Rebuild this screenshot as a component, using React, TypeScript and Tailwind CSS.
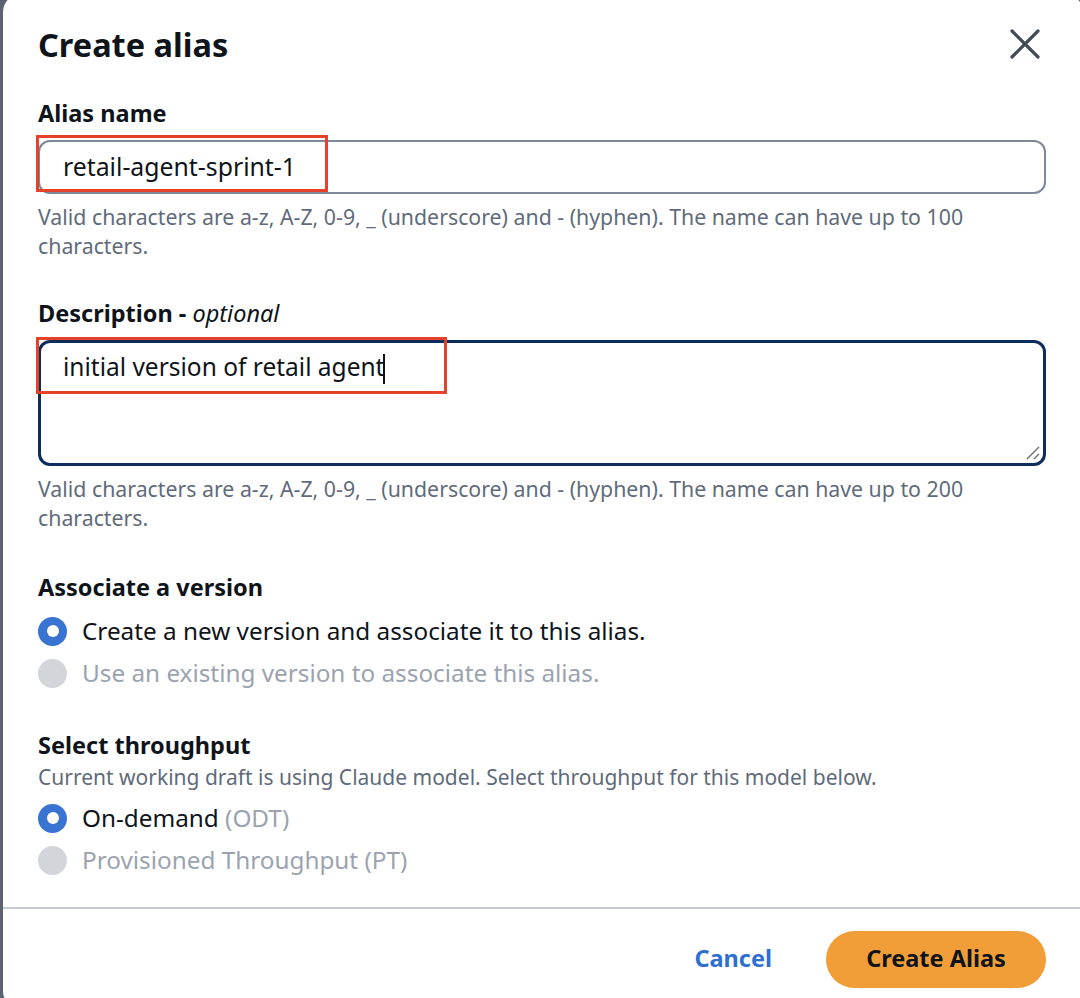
const font = { fontFamily: '"Noto Sans", "Open Sans", Arial, sans-serif' }

function Radio({ checked, disabled, children }: { checked?: boolean; disabled?: boolean; children: React.ReactNode }) {
  return (
    <div className="flex items-center gap-[15px] h-[42px]">
      {checked ? (
        <span className="w-[29px] h-[29px] rounded-full bg-[#3a74d2] flex items-center justify-center shrink-0">
          <span className="w-[12px] h-[12px] rounded-full bg-white" />
        </span>
      ) : (
        <span className="w-[29px] h-[29px] rounded-full bg-[#d2d5da] shrink-0" />
      )}
      <span className={disabled ? 'text-[#9ba3af]' : 'text-[#0f141a]'}>{children}</span>
    </div>
  )
}

export default function App() {
  return (
    <div className="h-[998px] overflow-hidden bg-[#5c6370] pl-[3px]" style={font}>
      <div className="w-[1080px] h-[1015px] -mt-[6px] bg-white rounded-[18px] flex flex-col">
        <div className="pl-[35px] pr-[34px] pt-[31px] flex-1">
          <div className="flex items-start justify-between">
            <h1 className="text-[32.5px] font-bold text-[#0f141a] leading-[40px]">Create alias</h1>
            <button className="mr-[9px] mt-[4px]">
              <svg width="30" height="30" viewBox="0 0 30 30">
                <path d="M2 2 L28 28 M28 2 L2 28" stroke="#434b56" strokeWidth="3.2" strokeLinecap="round" />
              </svg>
            </button>
          </div>

          <label className="block mt-[33px] text-[23.5px] font-bold text-[#0f141a] leading-[30px]">Alias name</label>
          <div className="relative mt-[12px] mr-[3px]">
            <div className="h-[54px] rounded-[12px] border-2 border-[#7d8998] flex items-center pl-[23px] text-[24.8px] text-[#0f141a]">
              retail-agent-sprint-1
            </div>
            <div className="absolute left-[-2px] top-[-5px] w-[292px] h-[57px] border-[3px] border-[#e6412b]" />
          </div>
          <p className="mt-[8px] pr-[20px] text-[21.3px] text-[#5f6b7a] leading-[29px]">
            Valid characters are a-z, A-Z, 0-9, _ (underscore) and - (hyphen). The name can have up to 100 characters.
          </p>

          <label className="block mt-[38px] text-[23.5px] font-bold text-[#0f141a] leading-[30px]">
            Description - <span className="italic font-normal">optional</span>
          </label>
          <div className="relative mt-[12px] mr-[3px]">
            <div className="relative h-[126px] rounded-[12px] border-[3px] border-[#0f2d5c] pl-[22px] pt-[8px] text-[24.5px] leading-[32px] text-[#0f141a]">
              <span>initial version of retail agent</span>
              <span className="inline-block w-[2px] h-[30px] bg-[#0f141a] align-middle -ml-[1px]" />
              <svg className="absolute right-[3px] bottom-[3px]" width="14" height="14" viewBox="0 0 14 14">
                <path d="M1 13 L13 1 M8 13 L13 8" stroke="#6b6b6b" strokeWidth="1.4" />
              </svg>
            </div>
            <div className="absolute left-[-2px] top-[-3px] w-[411px] h-[57px] border-[3px] border-[#e6412b]" />
          </div>
          <p className="mt-[8px] pr-[20px] text-[21.3px] text-[#5f6b7a] leading-[29px]">
            Valid characters are a-z, A-Z, 0-9, _ (underscore) and - (hyphen). The name can have up to 200 characters.
          </p>

          <h2 className="mt-[40px] text-[23.5px] font-bold text-[#0f141a] leading-[30px]">Associate a version</h2>
          <div className="mt-[8px] text-[24.3px]">
            <Radio checked>Create a new version and associate it to this alias.</Radio>
            <Radio disabled>Use an existing version to associate this alias.</Radio>
          </div>

          <h2 className="mt-[36px] text-[23.5px] font-bold text-[#0f141a] leading-[30px]">Select throughput</h2>
          <p className="mt-[2px] text-[21px] text-[#5f6b7a] leading-[30px]">
            Current working draft is using Claude model. Select throughput for this model below.
          </p>
          <div className="mt-[5px] text-[24.3px]">
            <Radio checked>
              On-demand <span className="text-[#9ba3af]">(ODT)</span>
            </Radio>
            <Radio disabled>Provisioned Throughput (PT)</Radio>
          </div>
        </div>

        <div className="border-t-2 border-[#c5cad1] h-[102px] flex items-center justify-end gap-[54px] pr-[37px]">
          <button className="text-[23.5px] font-bold text-[#2f6fd0]">Cancel</button>
          <button className="w-[220px] h-[57px] rounded-full bg-[#f29e38] text-[23.5px] font-bold text-[#0f141a]">
            Create Alias
          </button>
        </div>
      </div>
    </div>
  )
}
